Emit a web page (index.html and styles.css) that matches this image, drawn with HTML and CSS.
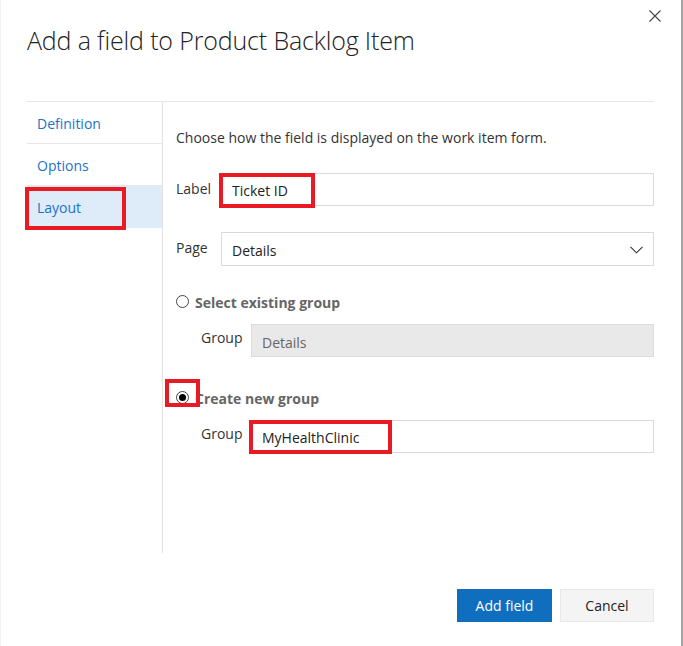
FILE: index.html
```html
<!DOCTYPE html>
<html>
<head>
<meta charset="utf-8">
<link rel="stylesheet" href="styles.css">
</head>
<body>
<div class="dialog">
  <div class="header">
    <h1 class="title">Add a field to Product Backlog Item</h1>
    <button class="close" aria-label="Close">
      <svg width="12" height="12" viewBox="0 0 12 12"><path d="M0.5 0.5 L11.5 11.5 M11.5 0.5 L0.5 11.5" stroke="#444" stroke-width="1.1" fill="none"/></svg>
    </button>
  </div>
  <div class="main">
    <nav class="nav">
      <div class="nav-item">Definition</div>
      <div class="nav-item">Options</div>
      <div class="nav-item active"><span class="mark mark-nav"></span>Layout</div>
    </nav>
    <div class="content">
      <p class="desc">Choose how the field is displayed on the work item form.</p>
      <div class="row row-label">
        <label class="lbl">Label</label>
        <div class="input"><span class="mark mark-ticket"></span>Ticket ID</div>
      </div>
      <div class="row row-page">
        <label class="lbl">Page</label>
        <div class="input select">Details
          <svg class="chev" width="13" height="8" viewBox="0 0 13 8"><path d="M0.5 0.8 L6.5 6.8 L12.5 0.8" stroke="#333" stroke-width="1.1" fill="none"/></svg>
        </div>
      </div>
      <div class="radio-row radio-first">
        <span class="radio"></span>
        <span class="radio-text">Select existing group</span>
      </div>
      <div class="row group-row">
        <label class="lbl lbl-group">Group</label>
        <div class="input disabled">Details</div>
      </div>
      <div class="radio-row radio-second">
        <span class="radio checked"></span>
        <span class="radio-text">Create new group</span>
        <span class="mark mark-radio"></span>
      </div>
      <div class="row group-row">
        <label class="lbl lbl-group">Group</label>
        <div class="input"><span class="mark mark-group"></span>MyHealthClinic</div>
      </div>
    </div>
  </div>
  <div class="footer">
    <button class="btn primary">Add field</button>
    <button class="btn secondary">Cancel</button>
  </div>
</div>
</body>
</html>
```
FILE: styles.css
```css
html, body {
  margin: 0;
  padding: 0;
  background: #fff;
}
body {
  font-family: "Open Sans", "Noto Sans", sans-serif;
  color: #333;
  font-size: 14px;
}
.dialog {
  width: 683px;
  height: 646px;
  box-sizing: border-box;
  border-left: 1px solid #f2f2f2;
  border-right: 2px solid #a3a3a3;
  position: relative;
  overflow: hidden;
}
.header {
  height: 101px;
  box-sizing: border-box;
  padding: 22px 0 0 26px;
}
.title {
  margin: 0;
  font-weight: 300;
  font-size: 25px;
  line-height: 36px;
  color: #222;
  letter-spacing: -0.15px;
}
.close {
  position: absolute;
  top: 10px;
  right: 20px;
  border: 0;
  background: none;
  padding: 0;
  width: 12px;
  height: 12px;
  display: block;
}
.close svg { display: block; }
.main {
  margin: 0 27px 0 26px;
  border-top: 1px solid #e6e6e6;
  height: 451px;
  display: flex;
}
.nav {
  width: 135px;
  border-right: 1px solid #e3e3e3;
  flex: none;
}
.nav-item {
  position: relative;
  height: 41px;
  line-height: 43px;
  padding-left: 10px;
  color: #1a73c8;
  border-bottom: 1px solid #e6e6e6;
  font-size: 14px;
}
.nav-item.active {
  background: #deecf9;
  border-bottom: 0;
  height: 42px;
  line-height: 44px;
}
.mark {
  position: absolute;
  border: 4px solid #e81b24;
  box-sizing: border-box;
  pointer-events: none;
}
.mark-nav {
  left: -2px;
  top: 1px;
  width: 101px;
  height: 43px;
}
.content {
  flex: 1;
  padding: 0 0 0 13px;
}
.desc {
  margin: 26px 0 0;
  line-height: 20px;
}
.row {
  display: flex;
  align-items: flex-start;
}
.lbl {
  width: 45px;
  flex: none;
  line-height: 20px;
  padding-top: 6px;
}
.row-label { margin-top: 25px; }
.row-page { margin-top: 26px; }
.input {
  position: relative;
  flex: 1;
  height: 33px;
  box-sizing: border-box;
  border: 1px solid #dadada;
  padding: 0 10px;
  line-height: 33px;
  background: #fff;
  font-size: 14px;
  color: #222;
}
.row-page .input { height: 34px; line-height: 35px; }
.chev {
  position: absolute;
  right: 10px;
  top: 13px;
}
.mark-ticket {
  left: -3px;
  top: -1px;
  width: 96px;
  height: 35px;
}
.radio-row {
  position: relative;
  display: flex;
  align-items: center;
  height: 20px;
}
.radio-first { margin-top: 26px; }
.radio-second { margin-top: 31px; }
.radio {
  width: 13px;
  height: 13px;
  box-sizing: border-box;
  border: 1px solid #444;
  border-radius: 50%;
  background: #fff;
  margin-right: 6px;
  position: relative;
  top: -1px;
}
.radio.checked::after {
  content: "";
  position: absolute;
  left: 2px;
  top: 2px;
  width: 7px;
  height: 7px;
  border-radius: 50%;
  background: #000;
}
.radio-text {
  font-weight: 700;
  color: #666;
  font-size: 14px;
}
.mark-radio {
  left: -11px;
  top: -9px;
  width: 35px;
  height: 28px;
}
.group-row { margin-top: 12px; padding-left: 25px; }
.lbl-group { width: 50px; padding-top: 4px; }
.disabled {
  background: #e9e9e9;
  border-color: #dcdcdc;
  color: #666;
  line-height: 35px;
}
.mark-group {
  left: -3px;
  top: -1px;
  width: 143px;
  height: 34px;
}
.footer {
  display: flex;
  justify-content: flex-end;
  gap: 8px;
  padding: 36px 27px 0 0;
}
.btn {
  height: 33px;
  border: 1px solid transparent;
  font-family: inherit;
  font-size: 14px;
  padding: 0;
}
.primary {
  width: 95px;
  background: #106ebe;
  color: #fff;
  border-color: #106ebe;
}
.secondary {
  width: 94px;
  background: #f4f4f4;
  border-color: #e8e8e8;
  color: #222;
}
```
